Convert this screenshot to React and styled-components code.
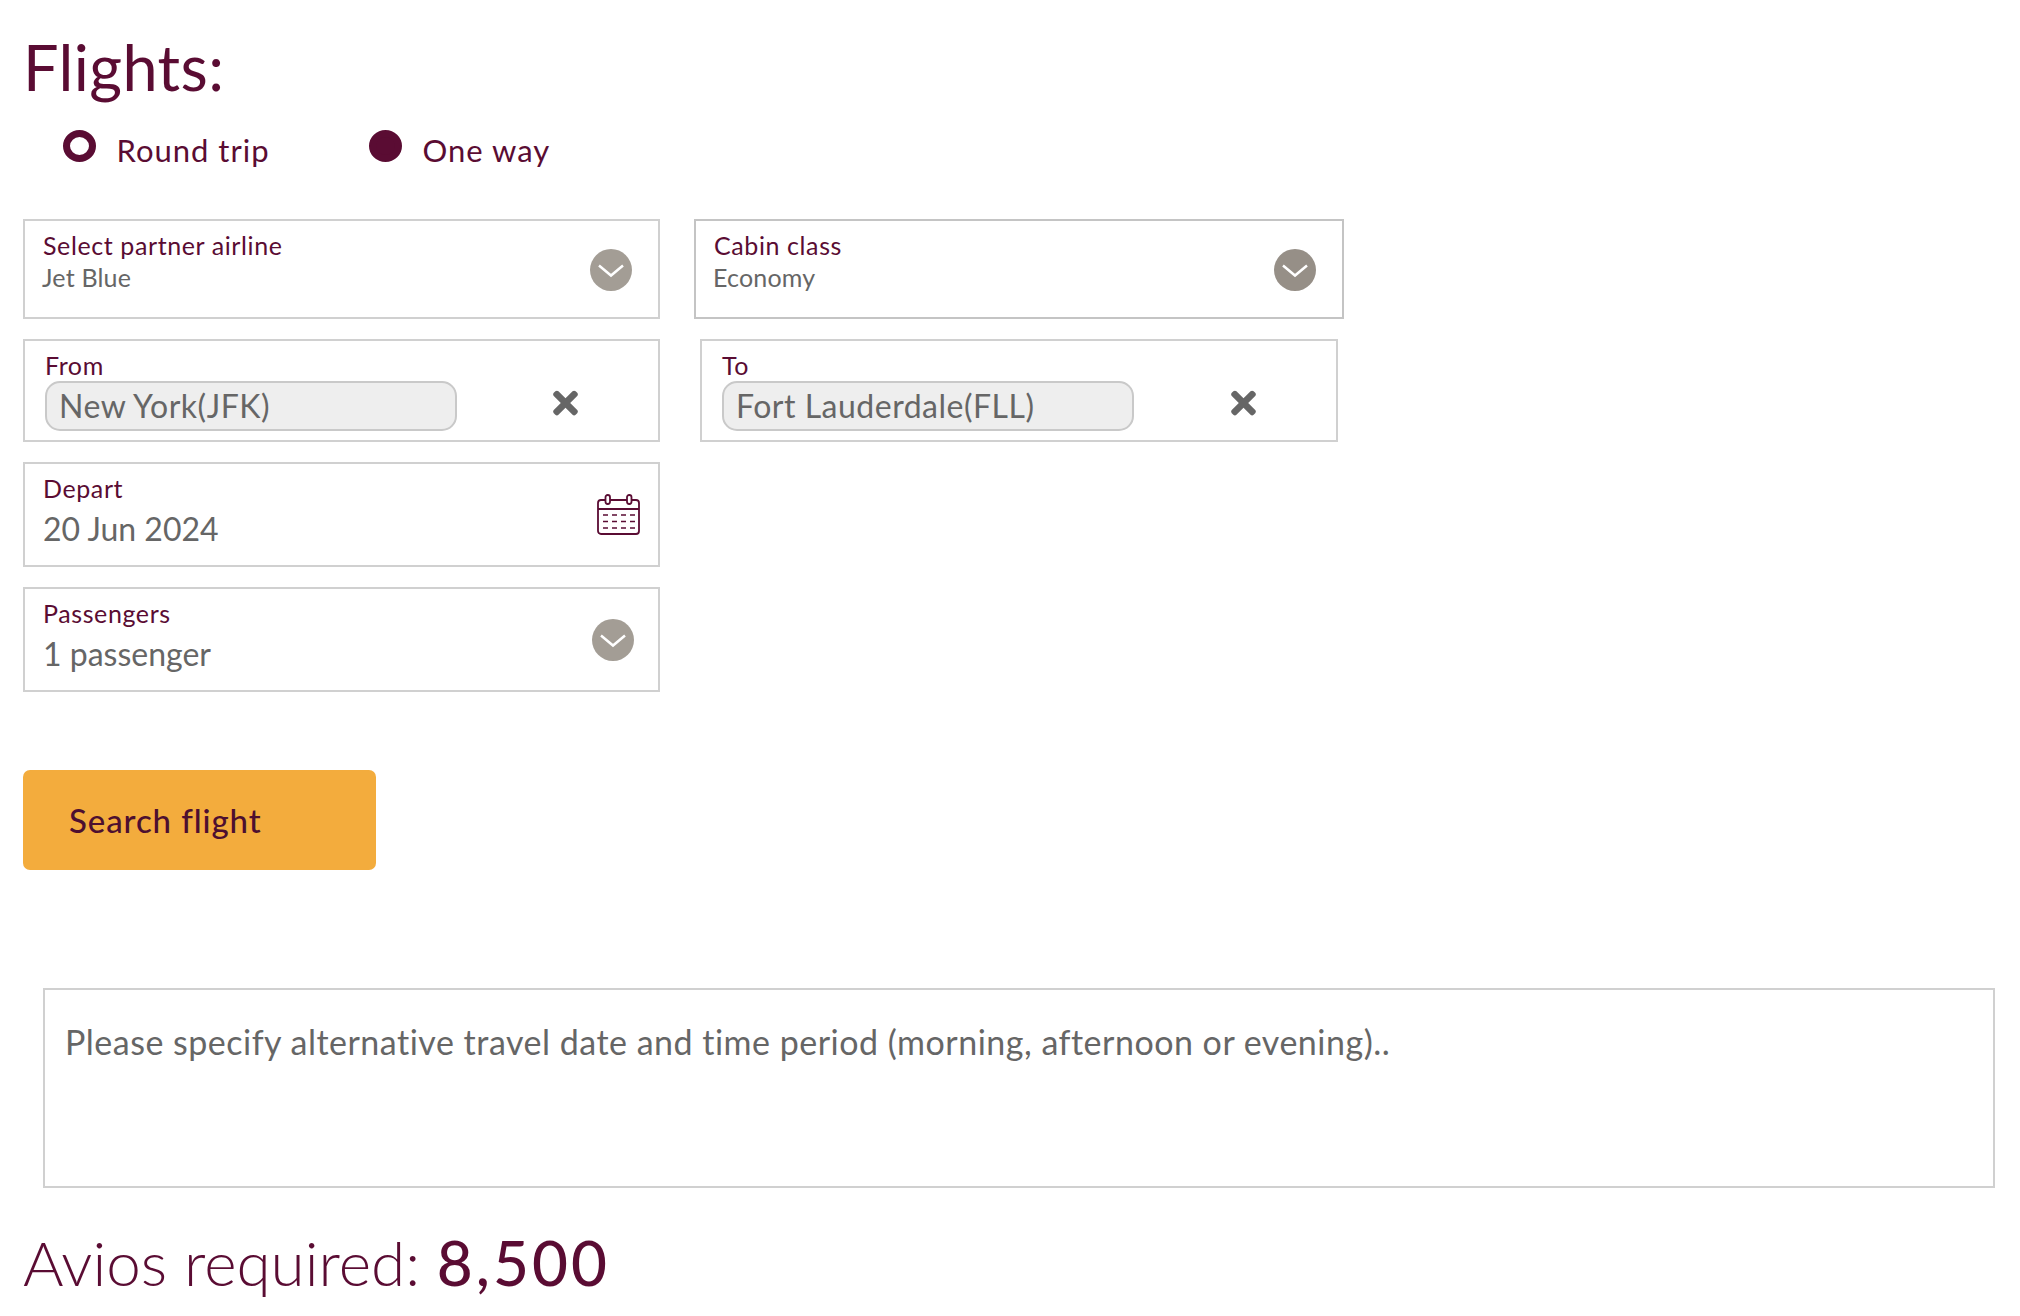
import React from "react";
import styled, { createGlobalStyle } from "styled-components";
import { FaTimes } from "react-icons/fa";

const maroon = "#5a0c33";
const grey = "#666666";

const GlobalStyle = createGlobalStyle`
  html, body {
    margin: 0;
    padding: 0;
    background: #ffffff;
  }
  body {
    font-family: Lato, "Open Sans", sans-serif;
    color: ${maroon};
  }
`;

const Page = styled.div`
  width: 2020px;
  height: 1316px;
  overflow: hidden;
  box-sizing: border-box;
  padding: 32px 26px 0 23px;
`;

const Title = styled.h1`
  margin: 0;
  height: 70px;
  font-size: 63px;
  line-height: 70px;
  font-weight: 400;
  letter-spacing: 0.4px;
`;

const RadioRow = styled.div`
  display: flex;
  margin: 28px 0 0 40px;
  height: 89px;
`;

const RadioItem = styled.div`
  display: flex;
  align-items: flex-start;
  gap: 20.5px;
  width: 306px;
`;

const Dot = styled.span`
  box-sizing: border-box;
  width: 33px;
  height: 32px;
  border-radius: 50%;
  border: 7px solid ${maroon};
  background: ${(p) => (p.$on ? maroon : "transparent")};
`;

const RadioText = styled.span`
  font-size: 31px;
  line-height: 36px;
  margin-top: 2px;
  letter-spacing: 1px;
`;

const Row = styled.div`
  display: flex;
  gap: ${(p) => p.$gap || 0}px;
  margin-bottom: 20px;
`;

const Field = styled.div`
  box-sizing: border-box;
  width: ${(p) => p.$w}px;
  height: ${(p) => p.$h}px;
  border: 2px solid ${(p) => p.$line || "#d0d0d0"};
  display: flex;
  justify-content: space-between;
  padding: ${(p) => p.$pad};
`;

const Label = styled.div`
  font-size: 25px;
  line-height: 30px;
  letter-spacing: 0.6px;
`;

const SmallValue = styled.div`
  font-size: 25px;
  line-height: 30px;
  margin: 2px 0 0 -1px;
  letter-spacing: 0.2px;
  color: ${grey};
`;

const BigValue = styled.div`
  font-size: 32px;
  line-height: 38px;
  margin-top: 7px;
  color: ${grey};
`;

const Pill = styled.div`
  box-sizing: border-box;
  width: 412px;
  height: 50px;
  margin-top: 1px;
  padding: 0 12px;
  border: 2px solid #c9c9c9;
  border-radius: 15px;
  background: #eeeeee;
  color: ${grey};
  font-size: 32px;
  line-height: 46px;
  letter-spacing: 0.5px;
`;

const PickBody = styled.div`
  display: flex;
  flex-direction: column;
`;

const ClearIcon = styled(FaTimes)`
  width: 25px;
  height: 36px;
  color: ${grey};
  margin: 35px 80px 0 0;
`;

const ChevronWrap = styled.svg`
  width: 42px;
  height: 42px;
  flex: none;
  margin-top: ${(p) => p.$top}px;
  margin-right: ${(p) => p.$right}px;
`;

const CalendarWrap = styled.svg`
  width: 43px;
  height: 41px;
  flex: none;
  margin: 21px 18px 0 0;
`;

const SearchButton = styled.button`
  display: block;
  box-sizing: border-box;
  width: 353px;
  height: 100px;
  margin-top: 78px;
  padding: 0 0 0 46px;
  border: 0;
  border-radius: 7px;
  background: #f3ac3d;
  color: #4d0f30;
  font-family: inherit;
  font-size: 33px;
  font-weight: 500;
  letter-spacing: 0.9px;
  text-align: left;
`;

const Notes = styled.div`
  box-sizing: border-box;
  width: 1952px;
  height: 200px;
  margin: 118px 0 0 20px;
  padding: 30px 20px;
  border: 2px solid #d0d0d0;
  color: ${grey};
  font-size: 34px;
  line-height: 44px;
  letter-spacing: 0.5px;
`;

const Total = styled.div`
  margin-top: 36px;
  font-size: 62px;
  line-height: 76px;
  font-weight: 300;

  strong {
    font-weight: 500;
    letter-spacing: 3px;
  }
`;

const Chevron = ({ top, right, dark }) => (
  <ChevronWrap viewBox="0 0 42 42" $top={top} $right={right}>
    <circle cx="21" cy="21" r="21" fill={dark ? "#968f87" : "#a39d95"} />
    <path d="M9 16.5 L21 26.5 L33 16.5" fill="none" stroke="#fff" strokeWidth="2.5" />
  </ChevronWrap>
);

const Calendar = () => (
  <CalendarWrap viewBox="0 0 43 41" fill="none" stroke={maroon} strokeWidth="1.8">
    <rect x="1" y="6" width="41" height="34" rx="3" />
    <path d="M1 15 H42" />
    <rect x="8.5" y="1" width="4.5" height="9" rx="2.2" fill="#fff" />
    <rect x="30" y="1" width="4.5" height="9" rx="2.2" fill="#fff" />
    <path
      d="M6 21 H11 M15 21 H20 M24 21 H29 M33 21 H38 M6 27.5 H11 M15 27.5 H20 M24 27.5 H29 M33 27.5 H38 M6 34 H11 M15 34 H20 M24 34 H29 M33 34 H38"
      strokeWidth="1.6"
    />
  </CalendarWrap>
);

const Picker = ({ w, line, label, value, dark, right }) => (
  <Field $w={w} $h={100} $line={line} $pad="9px 0 0 18px">
    <PickBody>
      <Label>{label}</Label>
      <SmallValue>{value}</SmallValue>
    </PickBody>
    <Chevron top={19} right={right} dark={dark} />
  </Field>
);

const Place = ({ w, label, value }) => (
  <Field $w={w} $h={103} $pad="9px 0 0 20px">
    <PickBody>
      <Label>{label}</Label>
      <Pill>{value}</Pill>
    </PickBody>
    <ClearIcon />
  </Field>
);

export default function App() {
  return (
    <Page>
      <GlobalStyle />
      <Title>Flights:</Title>
      <RadioRow>
        <RadioItem>
          <Dot />
          <RadioText>Round trip</RadioText>
        </RadioItem>
        <RadioItem>
          <Dot $on />
          <RadioText>One way</RadioText>
        </RadioItem>
      </RadioRow>

      <Row $gap={34}>
        <Picker w={637} label="Select partner airline" value="Jet Blue" right={26} />
        <Picker w={650} line="#c4c4c4" label="Cabin class" value="Economy" dark right={26} />
      </Row>
      <Row $gap={40}>
        <Place w={637} label="From" value="New York(JFK)" />
        <Place w={638} label="To" value="Fort Lauderdale(FLL)" />
      </Row>
      <Row>
        <Field $w={637} $h={105} $pad="9px 0 0 18px">
          <PickBody>
            <Label>Depart</Label>
            <BigValue>20 Jun 2024</BigValue>
          </PickBody>
          <Calendar />
        </Field>
      </Row>
      <Row>
        <Field $w={637} $h={105} $pad="9px 0 0 18px">
          <PickBody>
            <Label>Passengers</Label>
            <BigValue>1 passenger</BigValue>
          </PickBody>
          <Chevron top={21} right={24} />
        </Field>
      </Row>

      <SearchButton>Search flight</SearchButton>
      <Notes>Please specify alternative travel date and time period (morning, afternoon or evening)..</Notes>
      <Total>
        Avios required: <strong>8,500</strong>
      </Total>
    </Page>
  );
}
